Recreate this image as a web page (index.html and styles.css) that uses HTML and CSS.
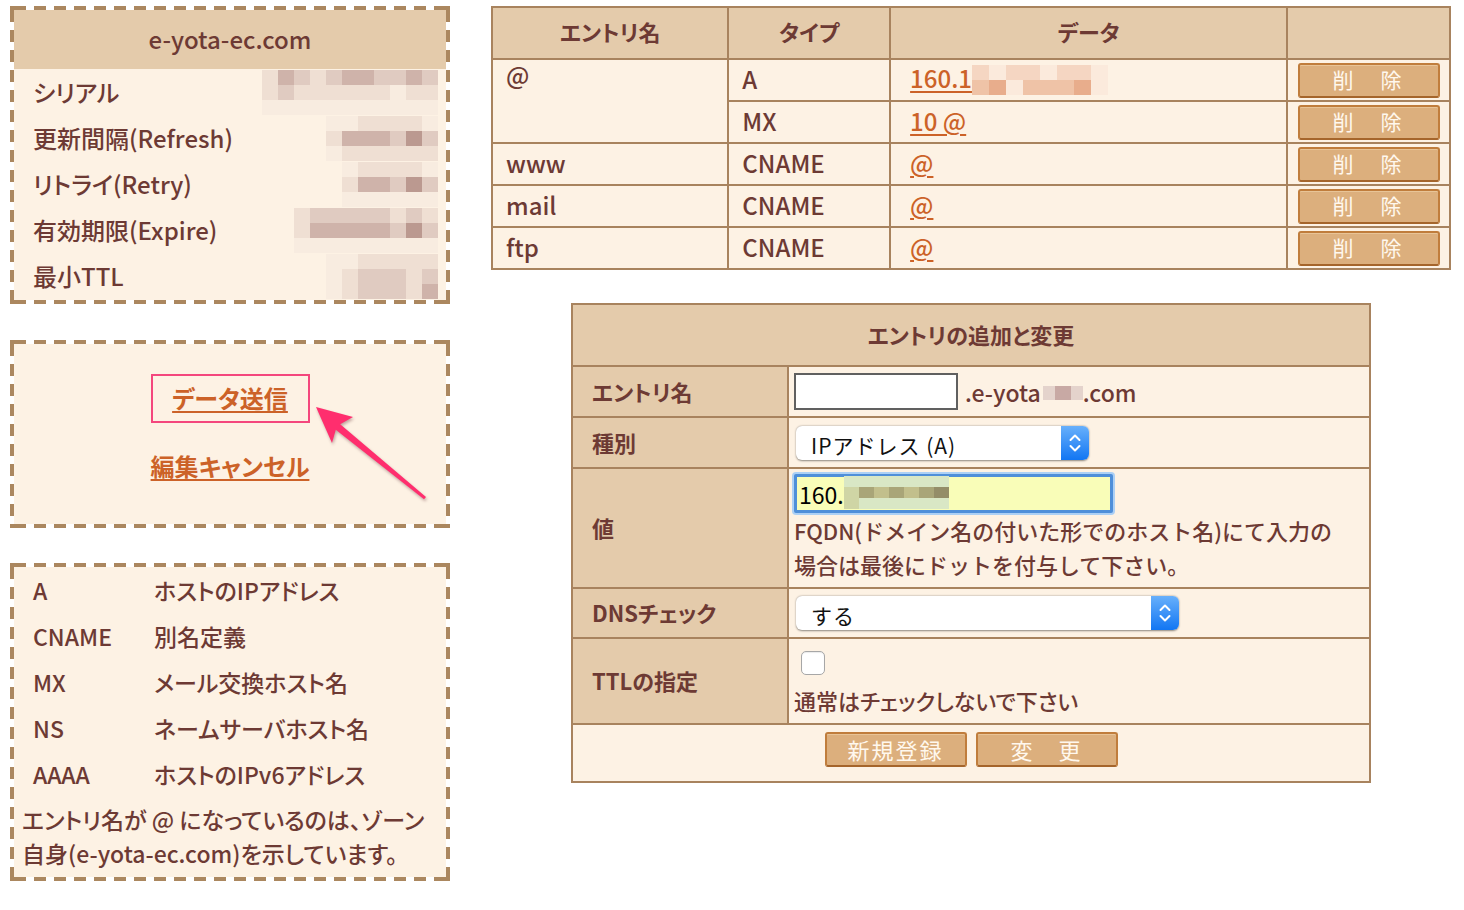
FILE: index.html
```html
<!DOCTYPE html>
<html lang="ja">
<head>
<meta charset="utf-8">
<title>DNS設定</title>
<link rel="stylesheet" href="styles.css">
</head>
<body>
<div class="side">
  <section class="panel soa">
    <div class="soa-head">e-yota-ec.com</div>
    <div class="kv"><span class="kv-label">シリアル</span>
      <div class="mosaic c11">
        <i class="b1"></i><i class="b3"></i><i class="b2"></i><i class="b1"></i><i class="b2"></i><i class="b3"></i><i class="b3"></i><i class="b2"></i><i class="b2"></i><i class="b3"></i><i class="b2"></i>
        <i class="b1"></i><i class="b2"></i><i class="b1"></i><i class="b1"></i><i class="b1"></i><i class="b1"></i><i class="b1"></i><i class="b1"></i><i class="b0"></i><i class="b1"></i><i class="b1"></i>
        <i class="b0"></i><i class="b0"></i><i class="b0"></i><i class="b0"></i><i class="b0"></i><i class="b0"></i><i class="b0"></i><i class="b0"></i><i class="b0"></i><i class="b0"></i><i class="b0"></i>
      </div>
    </div>
    <div class="kv"><span class="kv-label">更新間隔(Refresh)</span>
      <div class="mosaic c7">
        <i class="b0"></i><i class="b0"></i><i class="b1"></i><i class="b1"></i><i class="b1"></i><i class="b1"></i><i class="b0"></i>
        <i class="b1"></i><i class="b3"></i><i class="b3"></i><i class="b3"></i><i class="b2"></i><i class="b4"></i><i class="b2"></i>
        <i class="b0"></i><i class="b1"></i><i class="b1"></i><i class="b1"></i><i class="b1"></i><i class="b1"></i><i class="b1"></i>
      </div>
    </div>
    <div class="kv"><span class="kv-label">リトライ(Retry)</span>
      <div class="mosaic c6">
        <i class="b0"></i><i class="b1"></i><i class="b1"></i><i class="b1"></i><i class="b1"></i><i class="b0"></i>
        <i class="b1"></i><i class="b3"></i><i class="b3"></i><i class="b2"></i><i class="b4"></i><i class="b2"></i>
        <i class="b0"></i><i class="b0"></i><i class="b0"></i><i class="b0"></i><i class="b0"></i><i class="b0"></i>
      </div>
    </div>
    <div class="kv"><span class="kv-label">有効期限(Expire)</span>
      <div class="mosaic c9">
        <i class="b1"></i><i class="b2"></i><i class="b2"></i><i class="b2"></i><i class="b2"></i><i class="b2"></i><i class="b1"></i><i class="b2"></i><i class="b1"></i>
        <i class="b1"></i><i class="b3"></i><i class="b3"></i><i class="b3"></i><i class="b3"></i><i class="b3"></i><i class="b2"></i><i class="b4"></i><i class="b2"></i>
        <i class="b0"></i><i class="b0"></i><i class="b0"></i><i class="b0"></i><i class="b0"></i><i class="b0"></i><i class="b0"></i><i class="b0"></i><i class="b0"></i>
      </div>
    </div>
    <div class="kv"><span class="kv-label">最小TTL</span>
      <div class="mosaic c7">
        <i class="b0"></i><i class="b0"></i><i class="b1"></i><i class="b1"></i><i class="b1"></i><i class="b1"></i><i class="b1"></i>
        <i class="b0"></i><i class="b1"></i><i class="b2"></i><i class="b2"></i><i class="b2"></i><i class="b1"></i><i class="b2"></i>
        <i class="b0"></i><i class="b1"></i><i class="b2"></i><i class="b2"></i><i class="b2"></i><i class="b1"></i><i class="b3"></i>
      </div>
    </div>
  </section>

  <section class="panel actions">
    <div class="send-box"><a href="#" class="link">データ送信</a></div>
    <a href="#" class="link cancel">編集キャンセル</a>
    <svg class="arrow" width="440" height="188" viewBox="10 340 440 188">
      <polygon points="316,407 353,417 340.2,424.3 426,496.9 424,499.2 335.8,429.7 332,443" />
    </svg>
  </section>

  <section class="panel legend">
    <div class="lg-row"><span class="lg-type">A</span><span>ホストのIPアドレス</span></div>
    <div class="lg-row"><span class="lg-type">CNAME</span><span>別名定義</span></div>
    <div class="lg-row"><span class="lg-type">MX</span><span>メール交換ホスト名</span></div>
    <div class="lg-row"><span class="lg-type">NS</span><span>ネームサーバホスト名</span></div>
    <div class="lg-row"><span class="lg-type">AAAA</span><span>ホストのIPv6アドレス</span></div>
    <p class="lg-note">エントリ名が @ になっているのは、ゾーン自身(e-yota-ec.com)を示しています。</p>
  </section>
</div>

<div class="main">
  <table class="records">
    <colgroup><col class="w-name"><col class="w-type"><col class="w-data"><col class="w-act"></colgroup>
    <tr><th>エントリ名</th><th>タイプ</th><th>データ</th><th></th></tr>
    <tr>
      <td rowspan="2" class="top">@</td><td>A</td>
      <td class="data"><a href="#" class="link">160.1</a><span class="mosaic dm c8"><i class="o1"></i><i class="o0"></i><i class="o1"></i><i class="o1"></i><i class="o0"></i><i class="o1"></i><i class="o1"></i><i class="o0"></i><i class="o2"></i><i class="o3"></i><i class="o0"></i><i class="o2"></i><i class="o2"></i><i class="o2"></i><i class="o3"></i><i class="o0"></i></span></td>
      <td class="act"><button class="btn">削　除</button></td>
    </tr>
    <tr><td>MX</td><td class="data"><a href="#" class="link">10 @</a></td><td class="act"><button class="btn">削　除</button></td></tr>
    <tr><td>www</td><td>CNAME</td><td class="data"><a href="#" class="link">@</a></td><td class="act"><button class="btn">削　除</button></td></tr>
    <tr><td>mail</td><td>CNAME</td><td class="data"><a href="#" class="link">@</a></td><td class="act"><button class="btn">削　除</button></td></tr>
    <tr><td>ftp</td><td>CNAME</td><td class="data"><a href="#" class="link">@</a></td><td class="act"><button class="btn">削　除</button></td></tr>
  </table>

  <table class="form">
    <colgroup><col class="w-label"><col></colgroup>
    <tr class="r-head"><th colspan="2">エントリの追加と変更</th></tr>
    <tr class="r-name">
      <th>エントリ名</th>
      <td><div class="name-line"><input type="text" class="text-in"><span class="domain">.e-yota<span class="mosaic gm"><i class="g1"></i><i class="g2"></i><i class="g1"></i></span>.com</span></div></td>
    </tr>
    <tr class="r-kind">
      <th>種別</th>
      <td><div class="select s-kind"><span class="sel-text">IPアドレス (A)</span><span class="stepper"><svg width="14" height="22" viewBox="0 0 14 22"><path d="M2.5 8 L7 3.5 L11.5 8 M2.5 14 L7 18.5 L11.5 14" fill="none" stroke="#fff" stroke-width="2" stroke-linecap="round" stroke-linejoin="round"/></svg></span></div></td>
    </tr>
    <tr class="r-val">
      <th>値</th>
      <td>
        <div class="val-in"><span>160.</span><span class="mosaic ym"><i class="y0"></i><i class="y0"></i><i class="y0"></i><i class="y0"></i><i class="y0"></i><i class="y0"></i><i class="y0"></i><i class="y1"></i><i class="y3"></i><i class="y2"></i><i class="y3"></i><i class="y2"></i><i class="y3"></i><i class="y4"></i><i class="y1"></i><i class="y0"></i><i class="y0"></i><i class="y0"></i><i class="y0"></i><i class="y0"></i><i class="y0"></i></span></div>
        <p class="help">FQDN(ドメイン名の付いた形でのホスト名)にて入力の場合は最後にドットを付与して下さい。</p>
      </td>
    </tr>
    <tr class="r-dns">
      <th>DNSチェック</th>
      <td><div class="select s-dns"><span class="sel-text">する</span><span class="stepper"><svg width="14" height="22" viewBox="0 0 14 22"><path d="M2.5 8 L7 3.5 L11.5 8 M2.5 14 L7 18.5 L11.5 14" fill="none" stroke="#fff" stroke-width="2" stroke-linecap="round" stroke-linejoin="round"/></svg></span></div></td>
    </tr>
    <tr class="r-ttl">
      <th>TTLの指定</th>
      <td><span class="check"></span><p class="ttl-note">通常はチェックしないで下さい</p></td>
    </tr>
    <tr class="r-btns">
      <td colspan="2"><div class="btn-row"><button class="btn wide">新規登録</button><button class="btn wide">変　更</button></div></td>
    </tr>
  </table>
</div>
</body>
</html>
```

FILE: styles.css
```css
* { box-sizing: border-box; }

body {
  margin: 0;
  padding-top: 6px;
  background: #ffffff;
  display: flex;
  align-items: flex-start;
  font-family: "Noto Sans CJK JP", "Noto Sans", sans-serif;
  font-weight: 500;
  color: #6d3a34;
}

.side {
  width: 440px;
  margin-left: 10px;
  display: flex;
  flex-direction: column;
}

.panel {
  --dash: repeating-linear-gradient(90deg, transparent 0 4px, #ab875f 4px 16px, transparent 16px 20px);
  --vdash: repeating-linear-gradient(180deg, transparent 0 4px, #ab875f 4px 16px, transparent 16px 20px);
  border: 4px solid transparent;
  background:
    linear-gradient(#ab875f, #ab875f) left top / 4px 4px no-repeat border-box,
    linear-gradient(#ab875f, #ab875f) right top / 4px 4px no-repeat border-box,
    linear-gradient(#ab875f, #ab875f) left bottom / 4px 4px no-repeat border-box,
    linear-gradient(#ab875f, #ab875f) right bottom / 4px 4px no-repeat border-box,
    var(--dash) left top / 100% 4px no-repeat border-box,
    var(--dash) left bottom / 100% 4px no-repeat border-box,
    var(--vdash) left top / 4px 100% no-repeat border-box,
    var(--vdash) right top / 4px 100% no-repeat border-box,
    linear-gradient(#fdf2e4, #fdf2e4) padding-box;
  position: relative;
}

/* SOA panel */
.soa { height: 298px; }
.soa-head {
  height: 59px;
  background: #e4cbab;
  display: flex;
  align-items: center;
  justify-content: center;
  font-size: 24px;
  padding-bottom: 2px;
}
.kv {
  height: 46px;
  display: flex;
  align-items: center;
  justify-content: space-between;
  padding: 0 8px 0 19px;
  font-size: 24px;
  font-feature-settings: "palt";
}
.kv-label { line-height: 46px; }

.mosaic { display: inline-grid; grid-auto-rows: 15px; }
.mosaic i { display: block; }
.c11 { grid-template-columns: repeat(11, 16px); }
.c9 { grid-template-columns: repeat(9, 16px); }
.c8 { grid-template-columns: repeat(8, 17px); }
.c7 { grid-template-columns: repeat(7, 16px); }
.c6 { grid-template-columns: repeat(6, 16px); }
.b0 { background: #f8ece0; }
.b1 { background: #efdfd3; }
.b2 { background: #e0cbc1; }
.b3 { background: #cfb3aa; }
.b4 { background: #bb9990; }

/* action panel */
.actions {
  margin-top: 36px;
  height: 188px;
  display: flex;
  flex-direction: column;
  align-items: center;
  padding-top: 30px;
}
.send-box {
  width: 159px;
  height: 49px;
  border: 2px solid #f4477d;
  display: flex;
  align-items: center;
  justify-content: center;
}
.link {
  color: #cc6228;
  text-decoration: underline;
  text-underline-offset: 3px;
  text-decoration-thickness: 2px;
}
.actions .link { font-size: 24px; font-weight: bold; font-feature-settings: "palt"; }
.send-box .link { margin-bottom: 2px; }
.cancel { margin-top: 26px; line-height: 34px; }
.arrow {
  position: absolute;
  left: -4px;
  top: -4px;
  filter: drop-shadow(1px 2px 1.5px rgba(80, 20, 30, 0.35));
}
.arrow polygon { fill: #ff2e6e; }

/* legend panel */
.legend {
  margin-top: 35px;
  height: 318px;
  font-size: 23px;
  font-feature-settings: "palt";
}
.lg-row {
  height: 46px;
  display: flex;
  align-items: center;
  padding-left: 19px;
}
.lg-type { width: 121px; }
.lg-note {
  margin: 5px 0 0;
  padding: 0 12px 0 8px;
  line-height: 34px;
}

/* main column */
.main {
  margin-left: 41px;
  width: 960px;
  display: flex;
  flex-direction: column;
  align-items: center;
}

table { border-collapse: collapse; }

.records { width: 960px; }
.w-name { width: 237px; }
.w-type { width: 162px; }
.w-data { width: 398px; }
.w-act { width: 163px; }
.records th, .records td { border: 2px solid #a8835e; }
.records th {
  background: #e4cbab;
  height: 52px;
  font-size: 22px;
  font-weight: bold;
  font-feature-settings: "palt";
  padding: 0 0 5px;
}
.records td {
  background: #fdf2e4;
  height: 42px;
  font-size: 24px;
  padding: 0 13px 2px;
  line-height: 30px;
}
.records td.top { vertical-align: top; padding-top: 0; }
.records td.data { padding-left: 19px; }
.records td.act { padding: 0; text-align: center; }
.dm { vertical-align: middle; margin-top: -4px; }
.o0 { background: #fbeadc; }
.o1 { background: #f5d6c2; }
.o2 { background: #efc3a7; }
.o3 { background: #e8ad8c; }

.btn {
  width: 142px;
  height: 35px;
  background: #dcaf7d;
  border: 2px solid #c07d3c;
  border-bottom-color: #a5652b;
  border-radius: 3px;
  color: #fff8ee;
  font-family: "Noto Sans CJK JP", sans-serif;
  font-size: 21px;
  letter-spacing: 3px;
  padding: 0 0 2px;
  line-height: 28px;
  box-shadow: inset 0 1px 0 #e8c497;
}

/* form */
.form { width: 800px; margin-top: 33px; }
.w-label { width: 216px; }
.form th, .form td { border: 2px solid #a8835e; }
.form th {
  background: #e4cbab;
  font-size: 22px;
  font-weight: bold;
  font-feature-settings: "palt";
  text-align: left;
  padding: 0 0 2px 19px;
}
.form .r-head th { text-align: center; height: 62px; padding: 0 0 3px; }
.form td { background: #fdf2e4; padding: 0 5px; font-size: 22px; }
.r-name th, .r-name td { height: 51px; }
.r-kind th, .r-kind td { height: 51px; }
.r-val th, .r-val td { height: 120px; }
.r-val td { vertical-align: top; padding-top: 5px; }
.r-dns th, .r-dns td { height: 50px; }
.r-ttl th, .r-ttl td { height: 86px; }
.r-ttl td { vertical-align: top; padding-top: 12px; }
.r-btns td { height: 58px; vertical-align: top; padding-top: 7px; }

.name-line { display: flex; align-items: center; }
.text-in {
  width: 164px;
  height: 37px;
  border: 2px solid #606060;
  background: #fff;
  margin: 0 7px 0 0;
}
.domain { font-size: 23px; display: inline-flex; align-items: center; }
.gm { grid-template-columns: 12px 16px 12px; grid-auto-rows: 14px; margin: 2px 0 0 2px; }
.g1 { background: #e4d3cc; }
.g2 { background: #c8a9a4; }

.select {
  display: flex;
  align-items: stretch;
  height: 34px;
  background: #fff;
  border-radius: 6px;
  box-shadow: 0 0.5px 2px rgba(0, 0, 0, 0.45);
  margin-left: 2px;
}
.s-kind { width: 293px; }
.s-dns { width: 383px; }
.sel-text {
  flex: 1;
  color: #111;
  font-weight: 400;
  font-size: 21px;
  letter-spacing: 1px;
  padding: 5px 0 0 15px;
  line-height: 28px;
}
.stepper {
  width: 28px;
  border-radius: 0 6px 6px 0;
  background: linear-gradient(#68b0fb, #1276f3);
  display: flex;
  align-items: center;
  justify-content: center;
}

.val-in {
  width: 319px;
  height: 39px;
  background: #f9fdb8;
  border: 3px solid #4f8fd9;
  box-shadow: 0 0 0 2px #acd0f5;
  border-radius: 2px;
  display: flex;
  align-items: center;
  color: #000;
  font-weight: 400;
  font-size: 23px;
  padding-left: 2px;
}
.ym { grid-template-columns: repeat(7, 15px); grid-auto-rows: 11px; margin-top: -2px; }
.y0 { background: #d9e7c5; }
.y1 { background: #cfd5a5; }
.y2 { background: #c2bf8c; }
.y3 { background: #a9a578; }
.y4 { background: #948d68; }

.help {
  margin: 0;
  line-height: 34px;
  font-size: 22px;
  padding-right: 18px;
}

.check {
  display: block;
  width: 24px;
  height: 24px;
  margin: 0 0 0 7px;
  background: #fff;
  border: 1px solid #a7a7a7;
  border-radius: 5px;
  box-shadow: inset 0 1px 1px rgba(0,0,0,0.08);
}
.ttl-note { margin: 10px 0 0; line-height: 30px; font-size: 22px; font-feature-settings: "palt"; }

.btn-row { display: flex; justify-content: center; gap: 9px; }
.btn.wide { font-size: 22px; letter-spacing: 2px; }
```
